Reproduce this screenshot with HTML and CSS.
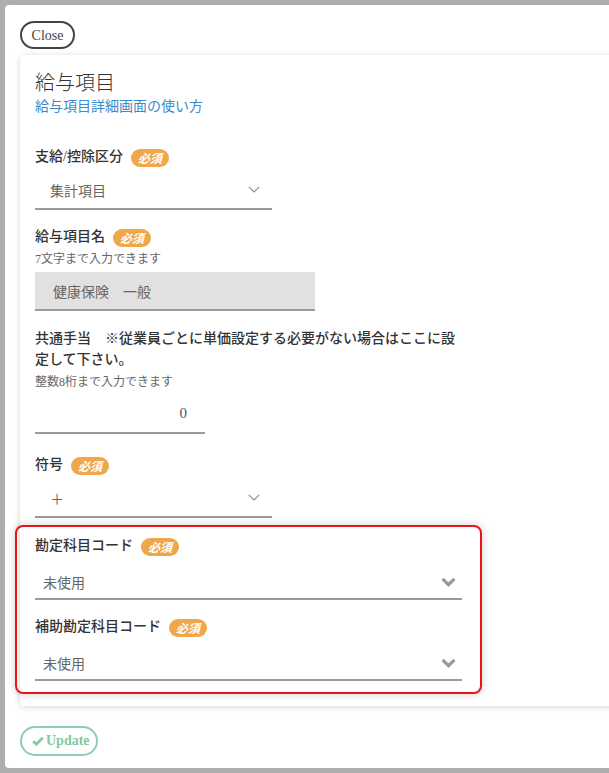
FILE: index.html
```html
<!DOCTYPE html>
<html lang="ja">
<head>
<meta charset="utf-8">
<title>給与項目</title>
<link rel="stylesheet" href="styles.css">
</head>
<body>
<div class="modal">
  <button class="btn-close">Close</button>
  <div class="card">
    <h1 class="title">給与項目</h1>
    <a class="help-link" href="#">給与項目詳細画面の使い方</a>

    <div class="field field-first">
      <div class="label-row"><span class="label">支給/控除区分</span><span class="badge">必須</span></div>
      <div class="select sel-sm">
        <span>集計項目</span>
        <svg class="chev-thin" width="12" height="7" viewBox="0 0 12 7"><path d="M0.8 0.8 L6 6 L11.2 0.8" fill="none" stroke="#8a8a8a" stroke-width="1.1"/></svg>
      </div>
    </div>

    <div class="field">
      <div class="label-row"><span class="label">給与項目名</span><span class="badge">必須</span></div>
      <div class="hint">7文字まで入力できます</div>
      <div class="input-gray">健康保険　一般</div>
    </div>

    <div class="field">
      <div class="label label-multi">共通手当　※従業員ごとに単価設定する必要がない場合はここに設定して下さい。</div>
      <div class="hint">整数8桁まで入力できます</div>
      <div class="num-input">0</div>
    </div>

    <div class="field field-sign">
      <div class="label-row"><span class="label">符号</span><span class="badge">必須</span></div>
      <div class="select sel-sm">
        <span>＋</span>
        <svg class="chev-thin" width="12" height="7" viewBox="0 0 12 7"><path d="M0.8 0.8 L6 6 L11.2 0.8" fill="none" stroke="#8a8a8a" stroke-width="1.1"/></svg>
      </div>
    </div>

    <div class="red-box">
      <div class="field field-inbox-first">
        <div class="label-row"><span class="label">勘定科目コード</span><span class="badge">必須</span></div>
        <div class="select sel-lg">
          <span>未使用</span>
          <svg class="chev-bold" width="15" height="10" viewBox="0 0 15 10"><path d="M1.6 1.8 L7.5 7.7 L13.4 1.8" fill="none" stroke="#9a9a9a" stroke-width="3.2"/></svg>
        </div>
      </div>
      <div class="field">
        <div class="label-row"><span class="label">補助勘定科目コード</span><span class="badge">必須</span></div>
        <div class="select sel-lg">
          <span>未使用</span>
          <svg class="chev-bold" width="15" height="10" viewBox="0 0 15 10"><path d="M1.6 1.8 L7.5 7.7 L13.4 1.8" fill="none" stroke="#9a9a9a" stroke-width="3.2"/></svg>
        </div>
      </div>
    </div>
  </div>

  <button class="btn-update">
    <svg class="check" width="12" height="10" viewBox="0 0 12 10"><path d="M1.2 5.2 L4.4 8.2 L10.8 1.6" fill="none" stroke="#84cba5" stroke-width="2.8"/></svg>Update
  </button>
</div>
</body>
</html>
```

FILE: styles.css
```css
html, body {
  margin: 0;
  padding: 0;
  overflow: hidden;
}

body {
  background: #aeaeb1;
  font-family: "Liberation Serif", "Noto Sans CJK JP", serif;
  color: #333;
}

.modal {
  box-sizing: border-box;
  margin: 5px 0 0 5px;
  width: 650px;
  height: 763px;
  background: #fff;
  border-radius: 4px 0 0 4px;
  padding: 16px 0 0 15px;
}

.btn-close {
  box-sizing: border-box;
  display: block;
  height: 28px;
  width: 55px;
  padding: 0;
  border: 2px solid #444;
  border-radius: 14px;
  background: #fff;
  color: #444;
  font-family: "Liberation Serif", serif;
  font-size: 14px;
  line-height: 25px;
}

.card {
  margin-top: 6px;
  padding: 15px 0 12px 15px;
  border-radius: 4px;
  box-shadow: 0 1px 6px rgba(0, 0, 0, 0.16);
}

.title {
  margin: 0;
  font-size: 20px;
  line-height: 27px;
  font-weight: 300;
  color: #333;
}

.help-link {
  display: block;
  font-size: 14px;
  line-height: 20px;
  color: #3a8bcb;
  text-decoration: none;
}

.field {
  margin-top: 17px;
}

.field-first {
  margin-top: 30px;
}

.field-sign {
  margin-top: 21px;
}

.field-inbox-first {
  margin-top: 0;
}

.label-row {
  display: flex;
  align-items: center;
  height: 20px;
}

.label {
  font-size: 14px;
  line-height: 20px;
  font-weight: 500;
  color: #333;
}

.label-multi {
  width: 425px;
  line-height: 21px;
}

.badge {
  margin-left: 8px;
  width: 38px;
  height: 18px;
  border-radius: 9px;
  background: #efa74b;
  color: #fff;
  font-size: 12px;
  font-weight: 700;
  font-style: italic;
  display: flex;
  align-items: center;
  justify-content: center;
  margin-top: 2px;
}

.hint {
  margin-top: 4px;
  font-size: 12px;
  line-height: 16px;
  color: #666;
}

.select {
  box-sizing: border-box;
  margin-top: 4px;
  height: 39px;
  border-bottom: 2px solid #9a9a9a;
  display: flex;
  align-items: center;
  justify-content: space-between;
  color: #666;
  font-size: 14px;
}

.sel-sm {
  width: 237px;
  padding: 0 12px 0 15px;
}

.sel-lg {
  margin-top: 5px;
  width: 100%;
  padding: 4px 6px 0 8px;
}

.input-gray {
  box-sizing: border-box;
  margin-top: 5px;
  width: 280px;
  height: 39px;
  background: #e1e1e1;
  border-bottom: 2px solid #9a9a9a;
  padding-left: 18px;
  display: flex;
  align-items: center;
  color: #666;
  font-size: 14px;
}

.num-input {
  box-sizing: border-box;
  margin-top: 5px;
  width: 170px;
  height: 39px;
  border-bottom: 2px solid #9a9a9a;
  padding-right: 18px;
  display: flex;
  align-items: center;
  justify-content: flex-end;
  color: #555;
  font-size: 15px;
}

.red-box {
  box-sizing: border-box;
  margin-top: 7px;
  margin-left: -20px;
  width: 467px;
  border: 2px solid #e8141a;
  border-radius: 8px;
  padding: 9px 18px 11px;
  box-shadow: 0 0 8px rgba(0, 0, 0, 0.2);
}

.btn-update {
  box-sizing: border-box;
  display: flex;
  align-items: center;
  gap: 2px;
  margin-top: 20px;
  height: 30px;
  width: 78px;
  padding: 0 0 0 10px;
  border: 2px solid #8ccfad;
  border-radius: 15px;
  background: #fff;
  color: #80c9a2;
  font-family: "Liberation Serif", serif;
  font-weight: 700;
  font-size: 14px;
}
```
